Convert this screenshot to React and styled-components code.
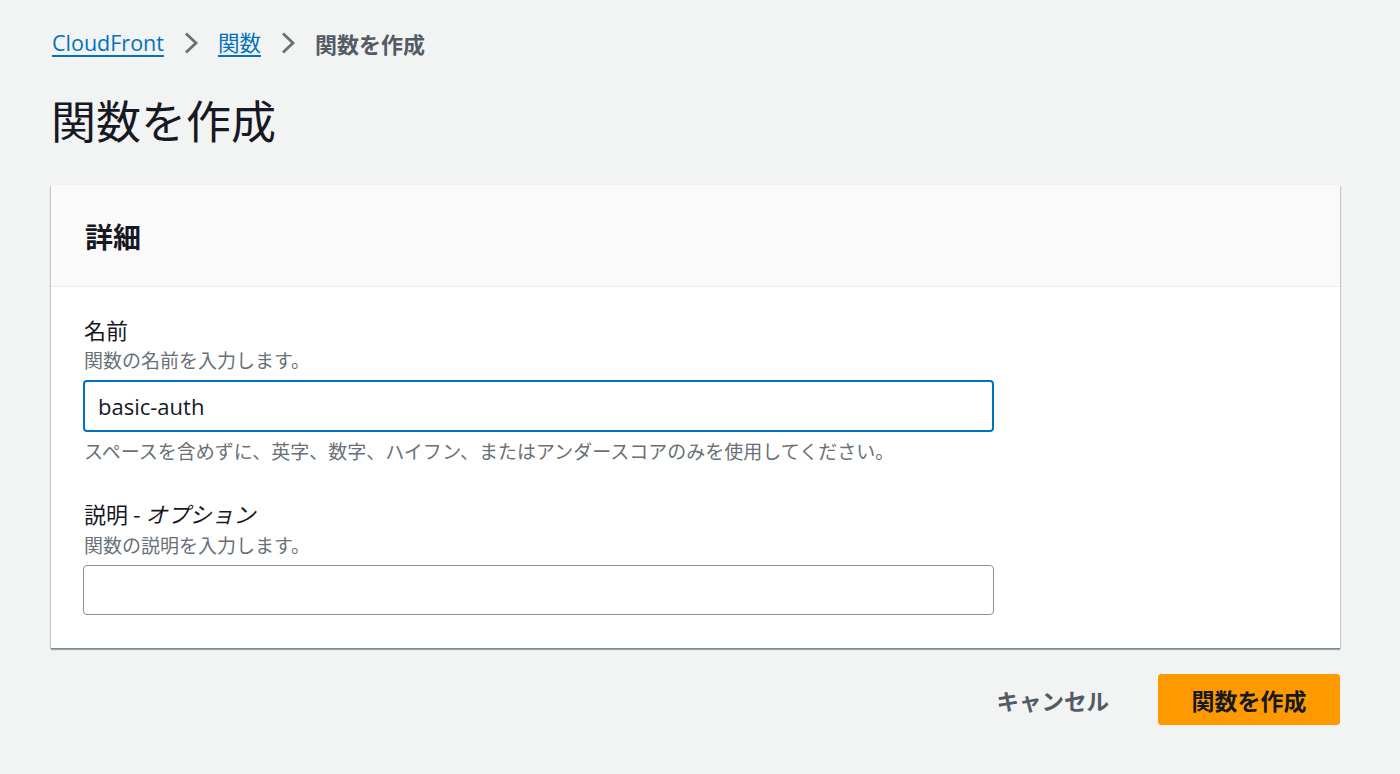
import React from "react";
import styled, { createGlobalStyle } from "styled-components";

const Global = createGlobalStyle`
  html, body { margin: 0; padding: 0; background: #f2f3f3; }
  body {
    font-family: "Open Sans", "Noto Sans CJK JP", sans-serif;
    color: #16191f;
  }
  * { box-sizing: border-box; }
`;

const Page = styled.div`
  padding: 29px 60px 40px 51px;
  min-height: 774px;
`;

const Breadcrumbs = styled.nav`
  display: flex;
  align-items: center;
  gap: 19px;
  height: 28px;
  font-size: 21.5px;
  line-height: 28px;
  padding-left: 1px;
`;

const Crumb = styled.a`
  color: #0073bb;
  text-decoration: underline;
  text-underline-offset: 4px;
  text-decoration-thickness: 1.5px;
  cursor: pointer;
`;

const CurrentCrumb = styled.span`
  color: #545b64;
  font-weight: 700;
  font-size: 22px;
  font-family: "Noto Sans CJK JP", sans-serif;
`;

const Chevron = styled.svg`
  width: 16px;
  height: 24px;
  display: block;
`;

const Title = styled.h1`
  margin: 35px 0 0 0;
  font-size: 45px;
  line-height: 56px;
  font-weight: 400;
  color: #16191f;
  font-family: "Noto Sans CJK JP", sans-serif;
`;

const Card = styled.section`
  margin-top: 37px;
  background: #ffffff;
  box-shadow: 0 2px 1px 0 rgba(0, 28, 36, 0.3), 1px 1px 1px 0 rgba(0, 28, 36, 0.15),
    -1px 1px 1px 0 rgba(0, 28, 36, 0.15);
`;

const CardHeader = styled.header`
  height: 102px;
  background: #fafafa;
  border-bottom: 1px solid #eaeded;
  display: flex;
  align-items: center;
  padding: 0 34px;
`;

const CardTitle = styled.h2`
  margin: 0;
  font-size: 28px;
  font-weight: 700;
  color: #16191f;
  font-family: "Noto Sans CJK JP", sans-serif;
`;

const CardBody = styled.div`
  padding: 28px 32px 33px 32px;
  display: flex;
  flex-direction: column;
  gap: 36px;
`;

const Field = styled.div`
  display: flex;
  flex-direction: column;
`;

const Label = styled.label`
  font-size: 22px;
  line-height: 28px;
  color: #16191f;
  padding-left: 1px;
  font-family: "Noto Sans CJK JP", sans-serif;
  em {
    font-style: italic;
  }
`;

const Hint = styled.div`
  margin-top: ${(p) => p.$top || 5}px;
  font-size: 19px;
  line-height: ${(p) => p.$lh || 26}px;
  color: #687078;
  padding-left: 1px;
  font-family: "Noto Sans CJK JP", sans-serif;
`;

const Input = styled.input`
  margin-top: 7px;
  width: 911px;
  height: ${(p) => (p.$focused ? 52 : 50)}px;
  border: ${(p) => (p.$focused ? "2px solid #0073bb" : "1px solid #879596")};
  border-radius: 4px;
  background: #fff;
  padding: 0 ${(p) => (p.$focused ? 13 : 14)}px;
  font-size: 22px;
  font-family: "Open Sans", "Noto Sans CJK JP", sans-serif;
  color: #16191f;
  outline: none;
`;

const Actions = styled.div`
  margin-top: 26px;
  display: flex;
  justify-content: flex-end;
  align-items: center;
  gap: 20px;
`;

const Button = styled.button`
  height: 51px;
  border-radius: 3px;
  font-size: ${(p) => (p.$primary ? 23 : 22.5)}px;
  font-weight: 700;
  font-family: "Noto Sans CJK JP", sans-serif;
  cursor: pointer;
  border: 1px solid ${(p) => (p.$primary ? "#ff9900" : "transparent")};
  background: ${(p) => (p.$primary ? "#ff9900" : "transparent")};
  color: ${(p) => (p.$primary ? "#16191f" : "#545b64")};
  padding: ${(p) => (p.$primary ? "0" : "0 28px")};
  width: ${(p) => (p.$primary ? "182px" : "auto")};
`;

const ChevronIcon = () => (
  <Chevron viewBox="0 0 16 24" aria-hidden="true">
    <path d="M3 2.5 L13 12 L3 21.5" fill="none" stroke="#687078" strokeWidth="2.8" strokeLinecap="butt" strokeLinejoin="miter" />
  </Chevron>
);

export default function App() {
  return (
    <>
      <Global />
      <Page>
        <Breadcrumbs>
          <Crumb>CloudFront</Crumb>
          <ChevronIcon />
          <Crumb>関数</Crumb>
          <ChevronIcon />
          <CurrentCrumb>関数を作成</CurrentCrumb>
        </Breadcrumbs>
        <Title>関数を作成</Title>
        <Card>
          <CardHeader>
            <CardTitle>詳細</CardTitle>
          </CardHeader>
          <CardBody>
            <Field>
              <Label>名前</Label>
              <Hint $top={4}>関数の名前を入力します。</Hint>
              <Input $focused defaultValue="basic-auth" />
              <Hint $top={7} $lh={24}>
                スペースを含めずに、英字、数字、ハイフン、またはアンダースコアのみを使用してください。
              </Hint>
            </Field>
            <Field>
              <Label>
                説明 - <em>オプション</em>
              </Label>
              <Hint>関数の説明を入力します。</Hint>
              <Input defaultValue="" />
            </Field>
          </CardBody>
        </Card>
        <Actions>
          <Button>キャンセル</Button>
          <Button $primary>関数を作成</Button>
        </Actions>
      </Page>
    </>
  );
}
